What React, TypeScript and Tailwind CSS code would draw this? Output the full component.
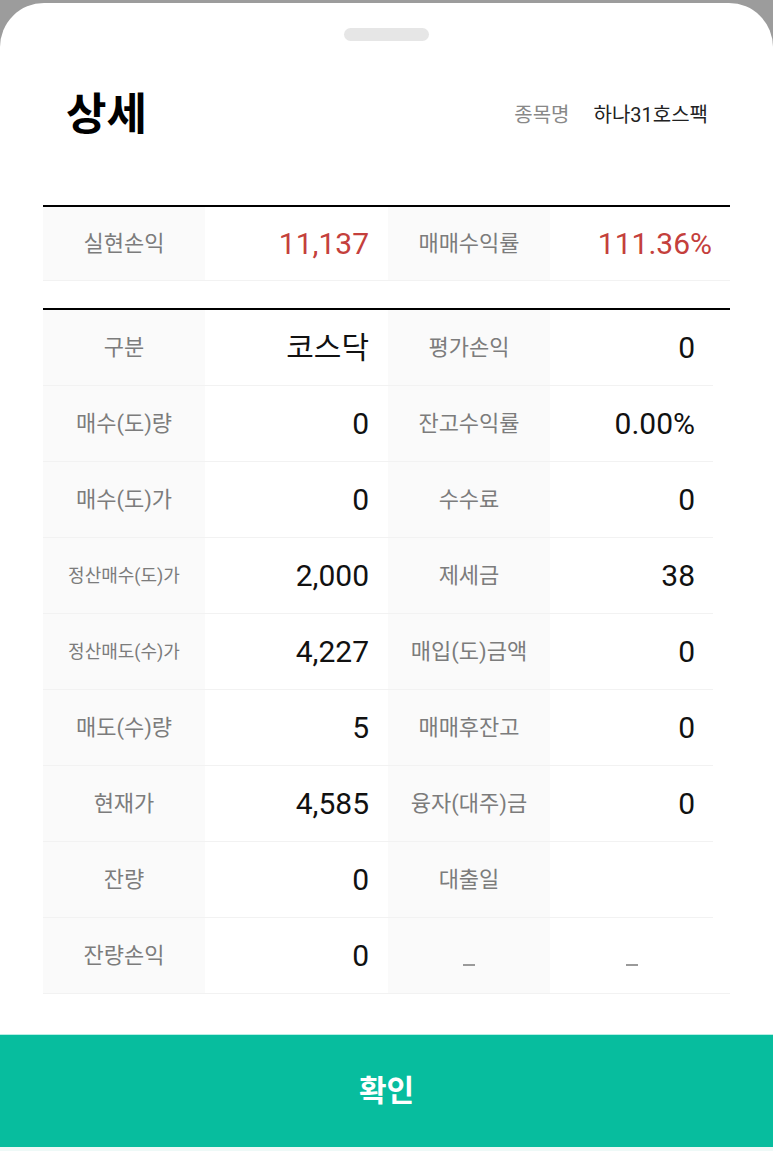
import React from "react";

const KR = "font-['Roboto','Noto_Sans_CJK_KR',sans-serif]";

type Cell = { label: string; value: string; small?: boolean; red?: boolean; dash?: boolean };

const rows: [Cell, Cell][] = [
  [{ label: "구분", value: "코스닥" }, { label: "평가손익", value: "0" }],
  [{ label: "매수(도)량", value: "0" }, { label: "잔고수익률", value: "0.00%" }],
  [{ label: "매수(도)가", value: "0" }, { label: "수수료", value: "0" }],
  [{ label: "정산매수(도)가", value: "2,000", small: true }, { label: "제세금", value: "38" }],
  [{ label: "정산매도(수)가", value: "4,227", small: true }, { label: "매입(도)금액", value: "0" }],
  [{ label: "매도(수)량", value: "5" }, { label: "매매후잔고", value: "0" }],
  [{ label: "현재가", value: "4,585" }, { label: "융자(대주)금", value: "0" }],
  [{ label: "잔량", value: "0" }, { label: "대출일", value: "" }],
  [{ label: "잔량손익", value: "0" }, { label: "_", value: "_", dash: true }],
];

function Dash() {
  return <div className="w-[12px] h-[2px] bg-[#9a9a9a] translate-y-[9px]" />;
}

function Label({ c }: { c: Cell }) {
  return (
    <div className="w-[162px] shrink-0 bg-[#fafafa] flex items-center justify-center">
      {c.dash ? (
        <Dash />
      ) : (
        <span className={`${c.small ? "text-[18px]" : "text-[22px]"} text-[#7c7c7c] leading-none`}>{c.label}</span>
      )}
    </div>
  );
}

function Value({ c, w }: { c: Cell; w: string }) {
  if (c.dash) {
    return (
      <div className={`${w} shrink-0 flex items-center justify-center`}>
        <Dash />
      </div>
    );
  }
  return (
    <div className={`${w} shrink-0 flex items-center justify-end pr-[19px]`}>
      <span className={`text-[30px] leading-none ${c.red ? "text-[#c4403c]" : "text-[#111]"}`}>{c.value}</span>
    </div>
  );
}

export default function App() {
  return (
    <div className={`w-[773px] h-[1151px] bg-[#9c9c9c] pt-[3px] overflow-hidden ${KR}`}>
      <div className="h-[1148px] bg-white rounded-t-[44px] flex flex-col">
        <div className="flex justify-center pt-[25px]">
          <div className="w-[85px] h-[13px] rounded-full bg-[#e6e6e6]" />
        </div>
        <div className="mt-[50px] h-[48px] flex items-center justify-between pl-[66px] pr-[65px]">
          <span className="text-[44px] font-bold text-black leading-none">상세</span>
          <div className="flex items-center gap-[24px] text-[20px] leading-none">
            <span className="text-[#888]">종목명</span>
            <span className="text-[#222]">하나31호스팩</span>
          </div>
        </div>

        <div className="ml-[43px] w-[687px] mt-[66px]">
          <div className="border-t-2 border-black">
            <div className="flex h-[74px] border-b border-[#f2f2f2]">
              <Label c={{ label: "실현손익", value: "" }} />
              <Value c={{ label: "", value: "11,137", red: true }} w="w-[183px]" />
              <Label c={{ label: "매매수익률", value: "" }} />
              <Value c={{ label: "", value: "111.36%", red: true }} w="w-[181px]" />
            </div>
          </div>

          <div className="mt-[27px] border-t-2 border-black">
            {rows.map(([a, b], i) => (
              <div
                key={i}
                className={`flex h-[76px] border-b border-[#f2f2f2] ${i === rows.length - 1 ? "w-[687px]" : "w-[670px]"}`}
              >
                <Label c={a} />
                <Value c={a} w="w-[183px]" />
                <Label c={b} />
                <Value c={b} w="w-[164px]" />
              </div>
            ))}
          </div>
        </div>

        <div className="mt-[40px] h-[113px] bg-[#07bd9e] border-t border-[#b6eee4] flex items-center justify-center">
          <span className="text-[30px] font-bold text-white leading-none">확인</span>
        </div>
        <div className="flex-1 bg-[#eef9f7]" />
      </div>
    </div>
  );
}
